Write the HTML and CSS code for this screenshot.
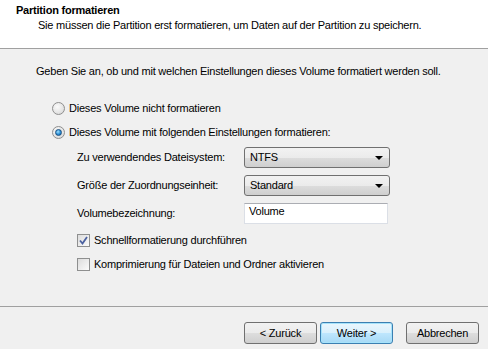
FILE: index.html
```html
<!DOCTYPE html>
<html lang="de">
<head>
  <meta charset="UTF-8" />
  <title>Partition formatieren</title>
  <link rel="stylesheet" href="styles.css">
</head>
<body>
  <div class="wizard">
    <div class="header">
      <div class="title">Partition formatieren</div>
      <div class="subtitle">Sie müssen die Partition erst formatieren, um Daten auf der Partition zu speichern.</div>
    </div>

    <div class="main">
      <div class="intro">Geben Sie an, ob und mit welchen Einstellungen dieses Volume formatiert werden soll.</div>

      <div class="options">
        <label class="option"><span class="radio"></span>Dieses Volume nicht formatieren</label>
        <label class="option"><span class="radio checked"></span>Dieses Volume mit folgenden Einstellungen formatieren:</label>
      </div>

      <div class="settings">
        <div class="row row-first">
          <span class="label">Zu verwendendes Dateisystem:</span>
          <div class="select">NTFS<span class="arrow"></span></div>
        </div>
        <div class="row">
          <span class="label">Größe der Zuordnungseinheit:</span>
          <div class="select">Standard<span class="arrow"></span></div>
        </div>
        <div class="row row-input">
          <span class="label">Volumebezeichnung:</span>
          <div class="textbox">Volume</div>
        </div>

        <div class="checks">
          <label class="check-row">
            <span class="checkbox">
              <svg width="9" height="9" viewBox="0 0 9 9"><path d="M1 4.5 L3.5 7.5 L8 1" fill="none" stroke="#4b61a0" stroke-width="1.8"/></svg>
            </span>Schnellformatierung durchführen
          </label>
          <label class="check-row"><span class="checkbox"></span>Komprimierung für Dateien und Ordner aktivieren</label>
        </div>
      </div>
    </div>

    <div class="footer">
      <button class="btn">&lt; Zurück</button>
      <button class="btn btn-default">Weiter &gt;</button>
      <button class="btn btn-cancel">Abbrechen</button>
    </div>
  </div>
</body>
</html>
```

FILE: styles.css
```css
body {
  margin: 0;
  background: #f0f0f0;
  font-family: "Liberation Sans", Arial, sans-serif;
  font-size: 11px;
  letter-spacing: -0.22px;
  color: #000;
}
.wizard {
  width: 488px;
  height: 349px;
  display: flex;
  flex-direction: column;
}
.header {
  height: 49px;
  box-sizing: border-box;
  background: #fff;
  border-bottom: 1px solid #a0a0a0;
  padding: 3px 0 0 16px;
  line-height: 13px;
}
.title {
  font-weight: bold;
  margin-top: 1px;
}
.subtitle {
  margin-top: 2px;
  padding-left: 22px;
}
.main {
  flex: 1;
  padding: 16px 0 0 36px;
  line-height: 13px;
}
.options {
  margin-top: 18px;
  padding-left: 16px;
}
.option {
  display: flex;
  align-items: center;
  height: 24px;
}
.radio {
  width: 11px;
  height: 11px;
  border-radius: 50%;
  border: 1px solid #8f8f8f;
  background: radial-gradient(circle at 40% 35%, #fbfbfb 0%, #e4e4e4 60%, #cfcfcf 100%);
  margin-right: 4px;
  position: relative;
  flex: none;
}
.radio.checked::after {
  content: "";
  position: absolute;
  left: 2px;
  top: 2px;
  width: 5px;
  height: 5px;
  border-radius: 50%;
  border: 1px solid #1a4f80;
  background: radial-gradient(circle at 40% 35%, #9fe0ff 0%, #2b8fd6 55%, #0c5da0 100%);
}
.settings {
  padding-left: 41px;
}
.row {
  display: flex;
  align-items: center;
  margin-top: 7px;
}
.row-first {
  margin-top: 3px;
}
.label {
  width: 167px;
}
.select {
  width: 139px;
  height: 19px;
  border: 1px solid #707070;
  border-radius: 3px;
  background: linear-gradient(#f2f2f2 0%, #ebebeb 50%, #dddddd 51%, #cfcfcf 100%);
  padding-left: 5px;
  display: flex;
  align-items: center;
  position: relative;
}
.arrow {
  position: absolute;
  right: 6px;
  top: 8px;
  border-left: 4px solid transparent;
  border-right: 4px solid transparent;
  border-top: 4px solid #000;
}
.textbox {
  width: 138px;
  height: 18px;
  background: #fff;
  border: 1px solid #dbdfe6;
  border-top-color: #abadb3;
  padding: 1px 0 0 4px;
  line-height: 13px;
}
.checks {
  margin-top: 4px;
}
.check-row {
  display: flex;
  align-items: center;
  height: 24px;
}
.checkbox {
  width: 11px;
  height: 11px;
  border: 1px solid #8e8f8f;
  background: linear-gradient(135deg, #dcdcdc, #fbfbfb);
  margin-right: 4px;
  display: flex;
  align-items: center;
  justify-content: center;
  flex: none;
}
.footer {
  height: 43px;
  border-top: 1px solid #a0a0a0;
  display: flex;
  justify-content: flex-end;
  align-items: flex-start;
  padding: 15px 9px 0 0;
  box-sizing: border-box;
}
.btn {
  width: 73px;
  height: 22px;
  margin: 0 0 0 3px;
  padding: 0;
  border: 1px solid #707070;
  border-radius: 3px;
  background: linear-gradient(#f2f2f2 0%, #ebebeb 50%, #dddddd 51%, #cfcfcf 100%);
  font-family: inherit;
  font-size: 11px;
  letter-spacing: -0.22px;
  color: #000;
}
.btn-default {
  border-color: #3c7fb1;
  box-shadow: inset 0 0 0 1px #a6e3fb;
  background: linear-gradient(#eaf6fd 0%, #d9f0fc 50%, #bee6fd 51%, #a7d9f5 100%);
}
.btn-cancel {
  margin-left: 13px;
}
```
